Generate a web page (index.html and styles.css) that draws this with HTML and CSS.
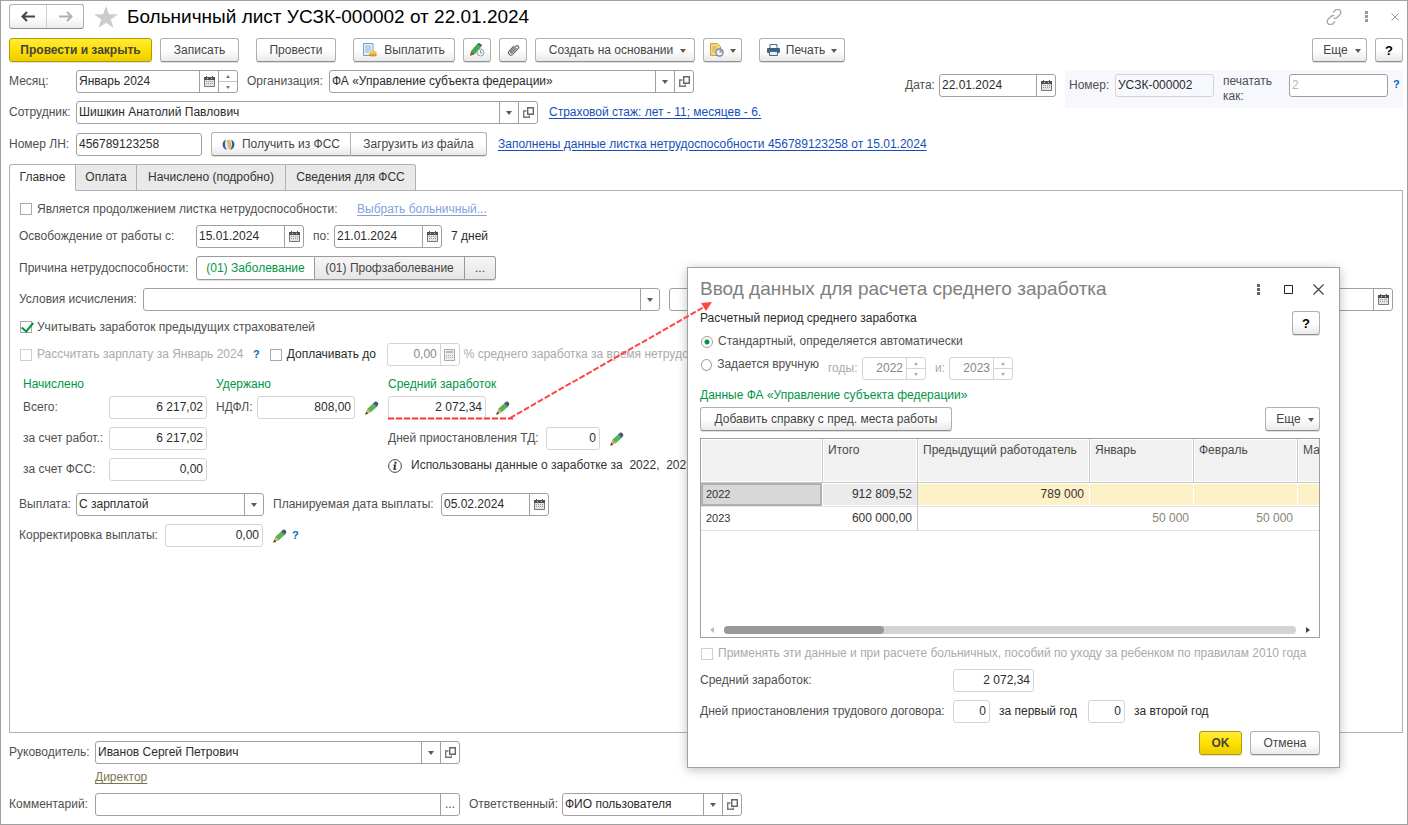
FILE: index.html
```html
<!DOCTYPE html>
<html lang="ru">
<head>
<meta charset="utf-8">
<meta name="viewport" content="width=device-width, initial-scale=1">
<title>Больничный лист УСЗК-000002 от 22.01.2024</title>
<link rel="stylesheet" href="styles.css">
</head>
<body>
<svg class="sprite" aria-hidden="true">
  <symbol id="i-calendar" viewBox="0 0 11 11"><path d="M.5 3.500v7h10v-7z" fill="#e4e4e4" stroke="#777"/><path d="M0 1h11v3H0z" fill="#505050"/><path d="M2 0h1v2H2zM8 0h1v2H8z" fill="#505050"/><path d="M3 2h1v1H3zM7 2h1v1H7z" fill="#ccc"/><path d="M2 5.500h7M2 7.500h7" stroke="#999" stroke-dasharray="1 1"/></symbol>
  <symbol id="i-down" viewBox="0 0 6 4"><path d="M0 0h6L3 4z" fill="#5a5a5a"/></symbol>
  <symbol id="i-open" viewBox="0 0 11 11"><path d="M4.700.700h5.600v6.600H4.700z" fill="none" stroke="#666" stroke-width="1.400"/><path d="M3.500 4H.700v6.300h5.600V8.500" fill="none" stroke="#777" stroke-width="1.400"/></symbol>
  <symbol id="i-pencil" viewBox="0 0 14 14"><path d="M8 2.500L11.700 6l-6 5.300L2.300 7.800z" fill="#56b35a"/><path d="M8 2.500l2-1.800c1.500-.8 3.700 1 3.200 3L11.700 6z" fill="#4a586c"/><path d="M2.300 7.800l3.500 3.500L.3 13.500z" fill="#e0a850"/><path d="M1.300 10.800L.2 13.800l3-1.100z" fill="#3a3a3a"/></symbol>
  <symbol id="i-calc" viewBox="0 0 11 12"><path d="M.5.500h10v11H.500z" fill="#eee" stroke="#aaa"/><path d="M2 2h7v2H2z" fill="#bbb"/><path d="M2 6.500h7M2 8.500h7" stroke="#aaa" stroke-dasharray="1 1"/></symbol>
  <symbol id="i-dots" viewBox="0 0 3 11"><path d="M0 0h3v3H0zM0 4h3v3H0zM0 8h3v3H0z" fill="currentColor"/></symbol>
</svg>

<main class="window">
  <header class="titlebar">
    <div class="nav">
      <button class="nav-btn" type="button" aria-label="Назад"><svg width="15" height="11" viewBox="0 0 15 11"><path d="M14 5.500H2M6 1L1.500 5.500 6 10" fill="none" stroke="#444" stroke-width="2"/></svg></button>
      <button class="nav-btn" type="button" aria-label="Вперед"><svg width="15" height="11" viewBox="0 0 15 11"><path d="M1 5.500h12M9 1l4.500 4.500L9 10" fill="none" stroke="#b0b0b0" stroke-width="2"/></svg></button>
    </div>
    <svg class="star" width="24" height="22" viewBox="0 0 24 22"><path d="M12 0l2.900 8.200H24l-7.200 5.200L19.500 22 12 16.800 4.500 22l2.700-8.600L0 8.200h9.100z" fill="#cacccf"/></svg>
    <h1 class="title">Больничный лист УСЗК-000002 от 22.01.2024</h1>
    <div class="window-tools">
      <button class="bare" type="button" aria-label="Ссылка"><svg width="16" height="16" viewBox="0 0 16 16" fill="none" stroke="#aaa" stroke-width="1.400"><path d="M7 3.500l2.300-2.200a3 3 0 0 1 4.600 0 3 3 0 0 1 0 4.400L11 8.600a3 3 0 0 1-3.400.6M9 12.500l-2.300 2.200a3 3 0 0 1-4.600 0 3 3 0 0 1 0-4.400L5 7.400a3 3 0 0 1 3.400-.6"/></svg></button>
      <button class="bare" type="button" aria-label="Меню"><svg class="muted" width="3" height="11"><use href="#i-dots"/></svg></button>
      <button class="bare" type="button" aria-label="Закрыть"><svg width="8" height="8" viewBox="0 0 8 8"><path d="M.5.500l7 7M7.500.500l-7 7" stroke="#999"/></svg></button>
    </div>
  </header>

  <div class="toolbar">
    <button class="btn primary w-main" type="button">Провести и закрыть</button>
    <button class="btn w-save" type="button">Записать</button>
    <button class="btn w-post group-start" type="button">Провести</button>
    <button class="btn w-pay group-start" type="button"><svg width="14" height="14" viewBox="0 0 14 14"><path d="M.5.500h9.500v12H.500z" fill="#e7f0f7" stroke="#7d9db8"/><path d="M2 3h6M2 5h6M2 7h6M2 9h4" stroke="#8fb3d0"/><ellipse cx="10" cy="11.500" rx="3.800" ry="2" fill="#d8962b"/><ellipse cx="10" cy="9.500" rx="3.500" ry="1.800" fill="#f4c44f"/></svg>Выплатить</button>
    <button class="btn w-icon" type="button" aria-label="Изменить"><svg width="15" height="14" viewBox="0 0 15 14"><path d="M7 1l4 3-6 7-4-3z" fill="#43a852"/><path d="M7 1l2-1 3 2-1 2z" fill="#2f5f45"/><path d="M1 8l4 3-5 2z" fill="#7b5a34"/><circle cx="10.500" cy="9.500" r="3.500" fill="#eef4f8" stroke="#8ba4b5"/><path d="M10.500 7.500v2l1.500 1" stroke="#6d8aa0" fill="none"/></svg></button>
    <button class="btn w-icon" type="button" aria-label="Вложения"><svg width="13" height="13" viewBox="0 0 13 13" fill="none" stroke="#666" stroke-width="1.100"><path d="M9.500 4L5 8.500c-1 1-2.200-.2-1.200-1.200l5-5c1.700-1.600 4 .7 2.400 2.400l-5.500 5.600c-2.300 2.200-5.700-1-3.400-3.400L7 2"/></svg></button>
    <button class="btn w-create" type="button">Создать на основании<svg class="caret" width="6" height="4"><use href="#i-down"/></svg></button>
    <button class="btn w-report" type="button" aria-label="Отчеты"><svg width="14" height="14" viewBox="0 0 14 14"><path d="M.5.500h7l3 3v9H.500z" fill="#f5d77c" stroke="#c9a13f"/><path d="M2 4h5M2 6h5M2 8h3" stroke="#d3ae50"/><circle cx="9.500" cy="9.500" r="3.600" fill="#eef" stroke="#5f7fa8" stroke-width="1.200"/><path d="M9.500 9.500V6.500a3 3 0 0 1 2.900 3z" fill="#e08080"/></svg><svg class="caret" width="6" height="4"><use href="#i-down"/></svg></button>
    <button class="btn w-print group-start" type="button"><svg width="13" height="12" viewBox="0 0 13 12"><path d="M3 .5h7v4H3z" fill="#fff" stroke="#4b6a86"/><rect y="4" width="13" height="5" rx="1" fill="#41617e"/><path d="M2.500 7.500h8v4h-8z" fill="#e6edf3" stroke="#4b6a86"/></svg>Печать<svg class="caret" width="6" height="4"><use href="#i-down"/></svg></button>
    <span class="spacer"></span>
    <button class="btn w-more" type="button">Еще<svg class="caret" width="6" height="4"><use href="#i-down"/></svg></button>
    <button class="btn help w-icon" type="button">?</button>
  </div>

  <section class="head-form">
    <div class="row row-top">
      <label class="lbl l-head" for="month">Месяц:</label>
      <div class="field f-month"><input id="month" value="Январь 2024"><button class="fb" type="button" aria-label="Календарь"><svg width="11" height="11"><use href="#i-calendar"/></svg></button><span class="spin"><button type="button" aria-label="Больше"><svg width="4" height="3" viewBox="0 0 4 3"><path d="M2 0l2 3H0z"/></svg></button><button type="button" aria-label="Меньше"><svg width="4" height="3" viewBox="0 0 4 3"><path d="M2 3l2-3H0z"/></svg></button></span></div>
      <label class="lbl l-org" for="org">Организация:</label>
      <div class="field f-org"><select id="org"><option>ФА «Управление субъекта федерации»</option></select><span class="fb"><svg width="6" height="4"><use href="#i-down"/></svg></span><button class="fb" type="button" aria-label="Открыть"><svg width="11" height="11"><use href="#i-open"/></svg></button></div>
      <div class="doc-id">
        <label class="lbl l-date" for="date">Дата:</label>
        <div class="field f-date"><input id="date" value="22.01.2024"><button class="fb" type="button" aria-label="Календарь"><svg width="11" height="11"><use href="#i-calendar"/></svg></button></div>
        <div class="number">
          <label class="lbl l-num" for="num">Номер:</label>
          <div class="field ro f-num"><input id="num" value="УСЗК-000002" readonly></div>
          <label class="lbl l-printas" for="printas">печатать как:</label>
          <div class="field f-num"><input id="printas" placeholder="2"></div>
          <a class="hint" href="#">?</a>
        </div>
      </div>
    </div>
    <div class="row">
      <label class="lbl l-head" for="emp">Сотрудник:</label>
      <div class="field f-emp"><select id="emp"><option>Шишкин Анатолий Павлович</option></select><span class="fb"><svg width="6" height="4"><use href="#i-down"/></svg></span><button class="fb" type="button" aria-label="Открыть"><svg width="11" height="11"><use href="#i-open"/></svg></button></div>
      <a class="link" href="#">Страховой стаж: лет - 11; месяцев - 6.</a>
    </div>
    <div class="row">
      <label class="lbl l-head" for="ln">Номер ЛН:</label>
      <div class="field f-ln"><input id="ln" value="456789123258"></div>
      <div class="joined">
        <button class="btn w-fss" type="button"><svg width="13" height="13" viewBox="0 0 13 13"><circle cx="6.500" cy="6.500" r="5.200" fill="#dfe9f5"/><path d="M4 1.500a5.500 5.500 0 0 0 1 10.500C2.500 9 2.500 4 4 1.500zM9 1.500a5.500 5.500 0 0 1-1 10.500C10.500 9 10.500 4 9 1.500z" fill="#2f5da8"/><path d="M5 2.500c2-1.500 4 0 4 4S7.500 11 6.500 11z" fill="#f0b43a"/></svg>Получить из ФСС</button>
        <button class="btn w-file" type="button">Загрузить из файла</button>
      </div>
      <a class="link" href="#">Заполнены данные листка нетрудоспособности 456789123258 от 15.01.2024</a>
    </div>
  </section>

  <nav class="tabs">
    <button class="tab active" type="button">Главное</button>
    <button class="tab t-pay" type="button">Оплата</button>
    <button class="tab t-detail" type="button">Начислено (подробно)</button>
    <button class="tab t-fss" type="button">Сведения для ФСС</button>
  </nav>

  <section class="panel">
    <div class="row line">
      <label class="check c-cont"><input type="checkbox">Является продолжением листка нетрудоспособности:</label>
      <a class="link pale" href="#">Выбрать больничный...</a>
    </div>
    <div class="row">
      <label class="lbl l-free" for="from">Освобождение от работы с:</label>
      <div class="field f-day"><input id="from" value="15.01.2024"><button class="fb" type="button" aria-label="Календарь"><svg width="11" height="11"><use href="#i-calendar"/></svg></button></div>
      <label class="lbl l-to" for="to">по:</label>
      <div class="field f-day"><input id="to" value="21.01.2024"><button class="fb" type="button" aria-label="Календарь"><svg width="11" height="11"><use href="#i-calendar"/></svg></button></div>
      <span class="dark after">7 дней</span>
    </div>
    <div class="row">
      <span class="lbl l-free">Причина нетрудоспособности:</span>
      <div class="joined switch">
        <button class="btn chosen w-ill" type="button">(01) Заболевание</button>
        <button class="btn w-prof" type="button">(01) Профзаболевание</button>
        <button class="btn w-dots" type="button">...</button>
      </div>
    </div>
    <div class="row">
      <label class="lbl l-cond" for="cond">Условия исчисления:</label>
      <div class="field f-cond"><select id="cond"><option></option></select><span class="fb"><svg width="6" height="4"><use href="#i-down"/></svg></span></div>
      <div class="field f-rest"><input aria-label="Дата условия"><button class="fb" type="button" aria-label="Календарь"><svg width="11" height="11"><use href="#i-calendar"/></svg></button></div>
    </div>
    <div class="row line">
      <label class="check"><input type="checkbox" checked>Учитывать заработок предыдущих страхователей</label>
    </div>
    <div class="row">
      <label class="check off c-calc"><input type="checkbox" disabled>Рассчитать зарплату за Январь 2024</label>
      <a class="hint near" href="#">?</a>
      <label class="check extra"><input type="checkbox">Доплачивать до</label>
      <div class="field ro dim f-pct"><input class="num" value="0,00" aria-label="Процент доплаты" readonly><button class="fb" type="button" aria-label="Калькулятор"><svg width="11" height="12"><use href="#i-calc"/></svg></button></div>
      <span class="faded">% среднего заработка за время нетрудоспособности</span>
    </div>

    <div class="totals">
      <div class="col col-acc">
        <h2 class="green">Начислено</h2>
        <div class="row"><label class="lbl l-acc" for="t1">Всего:</label><div class="field ro f-sum"><input class="num" id="t1" value="6 217,02" readonly></div></div>
        <div class="row"><label class="lbl l-acc" for="t2">за счет работ.:</label><div class="field ro f-sum"><input class="num" id="t2" value="6 217,02" readonly></div></div>
        <div class="row"><label class="lbl l-acc" for="t3">за счет ФСС:</label><div class="field ro f-sum"><input class="num" id="t3" value="0,00" readonly></div></div>
      </div>
      <div class="col col-tax">
        <h2 class="green">Удержано</h2>
        <div class="row"><label class="lbl l-tax" for="tax">НДФЛ:</label><div class="field ro f-sum"><input class="num" id="tax" value="808,00" readonly></div><button class="bare edit" type="button" aria-label="Изменить"><svg width="14" height="14"><use href="#i-pencil"/></svg></button></div>
      </div>
      <div class="col">
        <h2 class="green">Средний заработок</h2>
        <div class="row"><div class="field ro f-sum"><input class="num" value="2 072,34" aria-label="Средний заработок" readonly></div><button class="bare edit" type="button" aria-label="Изменить"><svg width="14" height="14"><use href="#i-pencil"/></svg></button></div>
        <div class="row"><label class="lbl l-susp" for="susp">Дней приостановления ТД:</label><div class="field ro f-susp"><input class="num" id="susp" value="0" readonly></div><button class="bare edit" type="button" aria-label="Изменить"><svg width="14" height="14"><use href="#i-pencil"/></svg></button></div>
        <div class="info"><svg width="14" height="14" viewBox="0 0 14 14"><circle cx="7" cy="7" r="6.400" fill="#fff" stroke="#444"/><path d="M6.500 2.800h2v2h-2zM5.500 5.500h2.700l-.9 4h1v1.200H5.200l.9-4h-.8z" fill="#333"/></svg><span>Использованы данные о заработке за&nbsp; 2022,&nbsp; 2023</span></div>
      </div>
    </div>

    <div class="row payout">
      <label class="lbl l-pay" for="pay">Выплата:</label>
      <div class="field f-pay"><select id="pay"><option>С зарплатой</option></select><span class="fb"><svg width="6" height="4"><use href="#i-down"/></svg></span></div>
      <label class="lbl l-plan" for="plan">Планируемая дата выплаты:</label>
      <div class="field f-day"><input id="plan" value="05.02.2024"><button class="fb" type="button" aria-label="Календарь"><svg width="11" height="11"><use href="#i-calendar"/></svg></button></div>
    </div>
    <div class="row">
      <label class="lbl l-corr" for="corr">Корректировка выплаты:</label>
      <div class="field ro f-sum"><input class="num" id="corr" value="0,00" readonly></div>
      <button class="bare edit" type="button" aria-label="Изменить"><svg width="14" height="14"><use href="#i-pencil"/></svg></button>
      <a class="hint near" href="#">?</a>
    </div>
  </section>

  <footer class="footer">
    <div class="row">
      <label class="lbl l-foot" for="head">Руководитель:</label>
      <div class="field f-foot"><select id="head"><option>Иванов Сергей Петрович</option></select><span class="fb"><svg width="6" height="4"><use href="#i-down"/></svg></span><button class="fb" type="button" aria-label="Открыть"><svg width="11" height="11"><use href="#i-open"/></svg></button></div>
    </div>
    <div class="post"><a class="link olive" href="#">Директор</a></div>
    <div class="row">
      <label class="lbl l-foot" for="comment">Комментарий:</label>
      <div class="field f-foot"><input id="comment"><button class="fb" type="button">...</button></div>
      <label class="lbl l-resp" for="resp">Ответственный:</label>
      <div class="field f-resp"><select id="resp"><option>ФИО пользователя</option></select><span class="fb"><svg width="6" height="4"><use href="#i-down"/></svg></span><button class="fb" type="button" aria-label="Открыть"><svg width="11" height="11"><use href="#i-open"/></svg></button></div>
    </div>
  </footer>

  <section class="dialog" role="dialog" aria-labelledby="dlg-title">
    <header class="dlg-head">
      <h2 class="dlg-title" id="dlg-title">Ввод данных для расчета среднего заработка</h2>
      <button class="bare" type="button" aria-label="Меню"><svg width="3" height="11"><use href="#i-dots"/></svg></button>
      <button class="bare" type="button" aria-label="Развернуть"><svg width="9" height="9" viewBox="0 0 9 9"><path d="M.5.500h8v8h-8z" fill="none" stroke="#222"/></svg></button>
      <button class="bare" type="button" aria-label="Закрыть"><svg width="11" height="11" viewBox="0 0 11 11"><path d="M.5.500l10 10M10.500.500l-10 10" stroke="#444" stroke-width="1.200"/></svg></button>
    </header>
    <div class="period">
      <fieldset class="modes">
        <legend class="dark">Расчетный период среднего заработка</legend>
        <label class="radio"><input type="radio" name="mode" checked>Стандартный, определяется автоматически</label>
        <div class="manual">
          <label class="radio r-manual"><input type="radio" name="mode">Задается вручную</label>
          <div class="row years">
            <label class="faded" for="y1">годы:</label>
            <div class="field ro dim f-year"><input class="num" id="y1" value="2022" readonly><span class="spin"><button type="button" aria-label="Больше"><svg width="4" height="3" viewBox="0 0 4 3"><path d="M2 0l2 3H0z"/></svg></button><button type="button" aria-label="Меньше"><svg width="4" height="3" viewBox="0 0 4 3"><path d="M2 3l2-3H0z"/></svg></button></span></div>
            <label class="faded l-and" for="y2">и:</label>
            <div class="field ro dim f-year"><input class="num" id="y2" value="2023" readonly><span class="spin"><button type="button" aria-label="Больше"><svg width="4" height="3" viewBox="0 0 4 3"><path d="M2 0l2 3H0z"/></svg></button><button type="button" aria-label="Меньше"><svg width="4" height="3" viewBox="0 0 4 3"><path d="M2 3l2-3H0z"/></svg></button></span></div>
          </div>
        </div>
      </fieldset>
      <button class="btn help w-icon" type="button">?</button>
    </div>
    <h3 class="green">Данные ФА «Управление субъекта федерации»</h3>
    <div class="dlg-bar">
      <button class="btn w-add" type="button">Добавить справку с пред. места работы</button>
      <button class="btn w-more" type="button">Еще<svg class="caret" width="6" height="4"><use href="#i-down"/></svg></button>
    </div>
    <div class="grid-box">
      <table class="grid">
        <colgroup><col class="c-year"><col class="c-total"><col class="c-prev"><col class="c-month"><col class="c-month"><col class="c-month"></colgroup>
        <thead><tr><th></th><th>Итого</th><th>Предыдущий работодатель</th><th>Январь</th><th>Февраль</th><th>Март</th></tr></thead>
        <tbody>
          <tr class="current"><td class="year">2022</td><td class="total">912 809,52</td><td>789 000</td><td></td><td></td><td></td></tr>
          <tr><td class="year">2023</td><td class="total">600 000,00</td><td></td><td class="auto">50 000</td><td class="auto">50 000</td><td></td></tr>
        </tbody>
      </table>
      <div class="scroll"><svg width="4" height="6" viewBox="0 0 4 6"><path d="M4 0v6L0 3z" fill="#bbb"/></svg><span class="track"><span class="thumb"></span></span><svg width="4" height="6" viewBox="0 0 4 6"><path d="M0 0v6l4-3z" fill="#444"/></svg></div>
    </div>
    <label class="check off apply"><input type="checkbox" disabled>Применять эти данные и при расчете больничных, пособий по уходу за ребенком по правилам 2010 года</label>
    <div class="row">
      <label class="lbl l-dlg" for="avg">Средний заработок:</label>
      <div class="field ro f-avg"><input class="num" id="avg" value="2 072,34" readonly></div>
    </div>
    <div class="row">
      <label class="lbl l-dlg" for="d1">Дней приостановления трудового договора:</label>
      <div class="field ro f-dd"><input class="num" id="d1" value="0" readonly></div>
      <label class="dark first-year" for="d2">за первый год</label>
      <div class="field ro f-dd"><input class="num" id="d2" value="0" readonly></div>
      <span class="dark after">за второй год</span>
    </div>
    <div class="dlg-foot">
      <button class="btn primary w-ok" type="button">OK</button>
      <button class="btn w-cancel" type="button">Отмена</button>
    </div>
  </section>

  <svg class="callout" width="330" height="122" viewBox="0 0 330 122" aria-hidden="true"><path d="M0 117.500h125" stroke="#f33" stroke-width="2" stroke-dasharray="6 2"/><path d="M122 117L316 6" stroke="#f44" stroke-width="2" stroke-dasharray="6 2"/><path d="M324 1l-11 1 5 8z" fill="#f44"/></svg>
</main>
</body>
</html>
```
FILE: styles.css
```css
* { box-sizing: border-box; }
body { margin: 0; background: #fff; }
body, button, input, select { font: 12px/15px "Liberation Sans", Arial, sans-serif; color: #4a4a4a; }
h1, h2, h3 { margin: 0; font-weight: normal; }
button, input, select { margin: 0; }
svg { flex: none; display: block; }
.sprite { position: absolute; width: 0; height: 0; }

.window { position: relative; min-height: 100vh; display: flex; flex-direction: column; border: 1px solid #a0a0a0; padding: 3px 4px 8px 8px; white-space: nowrap; overflow: hidden; }
.row { display: flex; align-items: center; }
.spacer { flex: 1; }

/* title */
.titlebar { display: flex; align-items: center; height: 25px; }
.nav { display: flex; width: 75px; border: 1px solid #b0b0b0; border-bottom-color: #8c8c8c; border-radius: 3px; background: linear-gradient(#fff 50%, #ececec); height: 25px; }
.nav-btn { flex: 1; display: flex; align-items: center; justify-content: center; border: 0; background: none; padding: 0; }
.nav-btn + .nav-btn { border-left: 1px solid #d0d0d0; }
.star { margin: 0 9px 0 10px; }
.title { font-size: 19px; line-height: 24px; color: #000; }
.window-tools { margin-left: auto; display: flex; align-items: center; gap: 23px; padding-right: 4px; }
.bare { border: 0; background: none; padding: 0; display: flex; }
.muted { color: #999; }

/* buttons */
.btn { height: 24px; display: flex; align-items: center; justify-content: center; gap: 7px; padding: 0; border: 1px solid #b0b0b0; border-bottom-color: #8f8f8f; border-radius: 3px; background: linear-gradient(#fff 50%, #e9e9e9); color: #444; box-shadow: 0 1px 0 #e0e0e0; }
.primary { background: linear-gradient(#ffec3d, #ffe000 50%, #eccd00); border-color: #b09a00; font-weight: bold; }
.help { color: #000; font-weight: bold; font-size: 13px; }
.caret { margin-top: 2px; }
.toolbar { display: flex; gap: 8px; margin-top: 9px; }
.group-start { margin-left: 9px; }
.w-main { width: 143px; }
.w-save { width: 79px; }
.w-post { width: 80px; }
.w-pay { width: 102px; }
.w-icon { width: 28px; }
.w-create { width: 160px; padding-left: 5px; }
.w-report { width: 39px; gap: 6px; }
.w-print { width: 86px; gap: 6px; }
.w-more { width: 55px; padding-left: 5px; }
.joined { display: flex; }
.joined .btn + .btn { border-left: 0; border-radius: 0 3px 3px 0; }
.joined .btn:not(:last-child) { border-top-right-radius: 0; border-bottom-right-radius: 0; }
.w-fss { width: 140px; }
.w-file { width: 136px; }
.switch .btn { border-color: #9a9a9a; background: linear-gradient(#f6f6f6, #e6e6e6); }
.switch .chosen { background: #fff; color: #009646; }
.w-ill { width: 119px; }
.w-prof { width: 150px; }
.w-dots { width: 31px; }

/* fields */
.field { display: flex; height: 23px; border: 1px solid #a0a0a0; border-radius: 3px; background: #fff; }
.field input, .field select { flex: 1; min-width: 0; width: 0; border: 0; background: none; padding: 0 2px; color: #2b2b2b; appearance: none; outline: 0; opacity: 1; }
.field input::placeholder { color: #b8b8b8; }
.field .num { text-align: right; padding-right: 3px; }
.fb { flex: none; width: 19px; display: flex; align-items: center; justify-content: center; padding: 0; border: 0; border-left: 1px solid #a0a0a0; background: none; }
.spin { flex: none; width: 19px; display: flex; flex-direction: column; border-left: 1px solid #a0a0a0; }
.spin button { flex: 1; display: flex; align-items: center; justify-content: center; border: 0; background: none; padding: 0; }
.spin button + button { border-top: 1px solid #c0c0c0; }
.spin svg { fill: #777; }
.ro, .ro .fb, .ro .spin { border-color: #d4d4d4; }
.dim .num { color: #888; }
.dim .spin svg { fill: #aaa; }
.dim .spin button + button { border-top-color: #d4d4d4; }

.lbl { flex: none; color: #4f4f4f; }
.dark { color: #2b2b2b; }
.faded { color: #aaa; }
.green { color: #009646; }
.hint { color: #0a6cb8; font-size: 11px; font-weight: bold; text-decoration: none; }
.link { color: #1550b5; text-decoration: underline; text-underline-offset: 2px; }
.pale { color: #86a2dc; }
.olive { color: #7b754f; }
.after { margin-left: 9px; }

/* document header */
.head-form { display: flex; flex-direction: column; gap: 8px; margin-top: 8px; }
.row-top { align-items: flex-start; }
.row-top > .lbl { line-height: 23px; }
.doc-id { margin-left: auto; margin-bottom: -15px; display: flex; align-items: flex-start; }
.l-date { width: 34px; line-height: 31px; }
.doc-id > .field { margin-top: 4px; }
.number { display: flex; align-items: flex-start; height: 38px; width: 338px; margin-left: 9px; padding: 4px 0 0 4px; background: #f6f8fe; }
.number > .l-num { width: 46px; line-height: 23px; }
.l-printas { width: 57px; margin: 0 0 0 9px; white-space: normal; }
.number .field { background: none; }
.number .field:nth-of-type(2) { background: #fff; margin-left: 9px; }
.number .hint { margin: 3px 0 0 5px; }
.l-head { width: 67px; }
.l-org { width: 82px; margin-left: 9px; }
.f-month { width: 162px; }
.f-org { width: 365px; }
.f-date { width: 117px; }
.f-num { width: 99px; }
.f-emp { width: 462px; }
.f-ln { width: 126px; }
.head-form .joined { margin-left: 9px; }
.head-form .link { margin-left: 11px; }

/* tabs */
.tabs { display: flex; margin-top: 8px; }
.tab { height: 27px; border: 1px solid #b0b0b0; border-left: 0; background: #e9e9e9; padding: 0; color: #333; position: relative; }
.tab.active { width: 67px; border-left: 1px solid #b0b0b0; background: #fff; border-bottom-color: #fff; border-top-left-radius: 3px; }
.t-pay { width: 61px; }
.t-detail { width: 149px; }
.t-fss { width: 130px; border-top-right-radius: 3px; }

.panel { flex: 1; display: flex; flex-direction: column; gap: 8px; margin-top: -1px; border: 1px solid #b0b0b0; padding: 10px 9px; }
.line { height: 16px; }
.check { display: flex; align-items: center; gap: 5px; color: #4f4f4f; }
.check input { appearance: none; position: relative; flex: none; width: 12px; height: 12px; border: 1px solid #a8a8a8; margin-left: 1px; background: #fff; }
.check input:checked::after { content: ""; position: absolute; left: 3px; top: -2px; width: 5px; height: 10px; border: solid #009646; border-width: 0 2px 2px 0; transform: rotate(40deg); }
.off { color: #aaa; }
.off input { border-color: #d0d0d0; }
.near { margin-left: 5px; }
.c-cont { width: 327px; }
.c-calc { width: 229px; }
.panel .pale { margin-left: 11px; }
.extra { margin-left: 9px; width: 109px; color: #2b2b2b; }
.l-free { width: 177px; }
.l-to { width: 21px; margin-left: 9px; }
.f-day { width: 108px; }
.l-cond { width: 124px; }
.f-cond { width: 517px; }
.f-rest { flex: 1; margin-left: 9px; }
.f-pct { width: 73px; margin: 0 4px 0 9px; }

.totals { display: flex; margin: 3px 0 4px; padding-left: 4px; }
.col { display: flex; flex-direction: column; gap: 8px; }
.col h2 { margin-bottom: -4px; font-size: 12px; }
.col-acc { width: 193px; }
.col-tax { width: 172px; }
.l-acc { width: 86px; }
.l-tax { width: 41px; }
.l-susp { width: 158px; }
.f-sum { width: 98px; }
.f-susp { width: 54px; }
.edit { margin-left: 10px; }
.info { display: flex; align-items: center; gap: 9px; color: #333; }
.l-pay { width: 57px; }
.f-pay { width: 188px; }
.l-plan { width: 168px; margin-left: 9px; }
.l-corr { width: 146px; }

/* footer */
.footer { margin-top: 8px; display: flex; flex-direction: column; }
.l-foot { width: 86px; }
.f-foot { width: 365px; }
.post { padding: 6px 0 8px 86px; }
.l-resp { width: 93px; margin-left: 9px; }
.f-resp { width: 180px; }

/* dialog */
.dialog { position: absolute; top: 266px; right: 67px; width: 653px; display: flex; flex-direction: column; padding: 9px 19px 12px 12px; border: 1px solid #a0a0a0; background: #fff; box-shadow: 0 2px 10px rgba(0, 0, 0, .25); }
.dlg-head { display: flex; align-items: center; gap: 24px; height: 24px; }
.dlg-title { flex: 1; font-size: 19px; line-height: 24px; color: #808080; }
.dlg-head .bare { color: #666; }
.dlg-head .bare:last-child { margin-left: -4px; margin-right: -4px; }
.period { display: flex; justify-content: space-between; margin-top: 10px; }
.modes { border: 0; margin: 0; padding: 0; min-width: 0; }
.modes legend { padding: 0; margin-bottom: 8px; }
.radio { display: flex; align-items: center; gap: 5px; height: 15px; color: #4f4f4f; }
.radio input { appearance: none; width: 12px; height: 12px; margin: 0 0 0 1px; border: 1px solid #a0a0a0; border-radius: 50%; }
.radio input:checked { background: radial-gradient(circle, #009646 2px, #fff 3px); }
.r-manual { width: 119px; }
.manual { display: flex; margin-top: 8px; }
.years { margin-left: 9px; }
.years label:first-child { width: 34px; }
.years .l-and { width: 14px; margin-left: 9px; }
.f-year { width: 64px; }
.dialog h3 { margin-top: 8px; font-size: 12px; }
.dlg-bar { display: flex; justify-content: space-between; margin-top: 4px; }
.w-add { width: 252px; }
.grid-box { margin-top: 7px; height: 200px; border: 1px solid #a0a0a0; overflow: hidden; display: flex; flex-direction: column; justify-content: space-between; }
.grid { table-layout: fixed; width: 701px; border-collapse: separate; border-spacing: 0; }
.c-year { width: 122px; }
.c-total { width: 95px; }
.c-prev { width: 172px; }
.c-month { width: 104px; }
.grid th { height: 44px; padding: 4px 5px; text-align: left; vertical-align: top; font-weight: normal; background: #f1f1f1; border-right: 1px solid #c8c8c8; border-bottom: 1px solid #c8c8c8; box-shadow: inset 0 0 0 1px #fff; }
.grid td { height: 24px; padding: 0 5px; text-align: right; border-bottom: 1px solid #e2e2e2; color: #333; }
.grid .year { text-align: left; font-size: 11px; }
.grid .total { border-right: 1px solid #c8c8c8; }
.grid .auto { color: #888474; }
.current td { background: #fdf1c7; border-right: 1px solid #fff; box-shadow: inset 0 -1px 0 #fff, inset 0 1px 0 #fff; }
.current .year { background: #d8d8d8; box-shadow: inset 0 0 0 2px #b0b0b0; }
.current .total { background: #ebebeb; }
.scroll { display: flex; align-items: center; gap: 10px; padding: 0 9px 3px; }
.track { flex: 1; height: 8px; border-radius: 4px; background: #d4d4d4; }
.thumb { display: block; width: 28%; height: 8px; border-radius: 4px; background: #999; }
.apply { margin: 8px 0; }
.dialog > .row + .row { margin-top: 8px; }
.l-dlg { width: 253px; }
.f-avg { width: 81px; }
.f-dd { width: 37px; }
.first-year { width: 80px; margin: 0 9px; }
.dlg-foot { display: flex; justify-content: flex-end; gap: 8px; margin-top: 8px; }
.w-ok { width: 43px; }
.w-cancel { width: 70px; }

.callout { position: absolute; left: 387px; top: 300px; pointer-events: none; }
```
